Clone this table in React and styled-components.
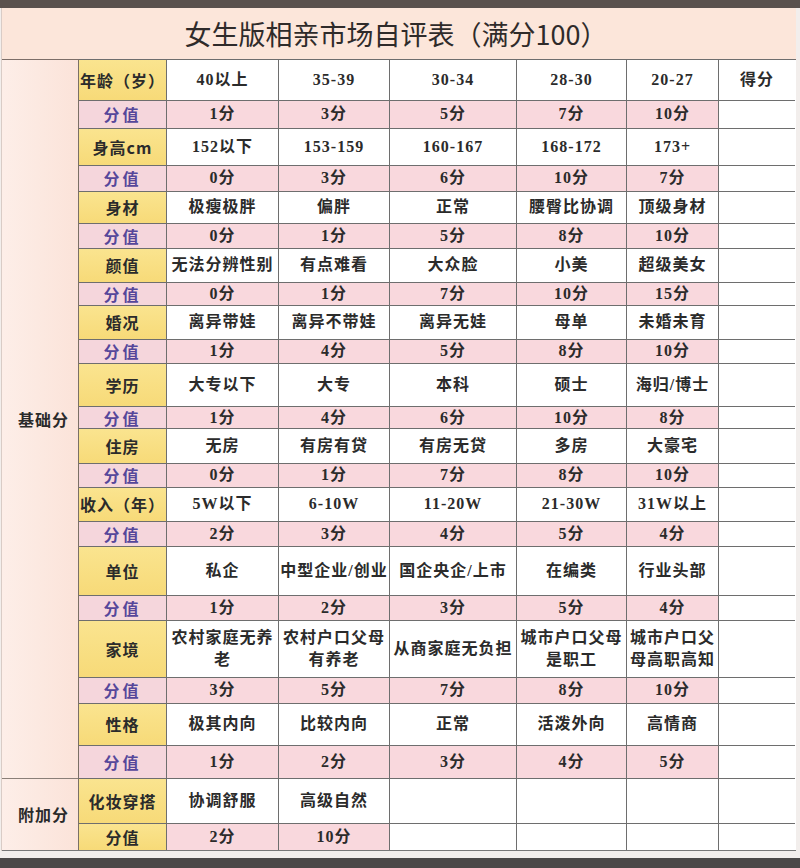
import styled, { createGlobalStyle } from "styled-components";

const GlobalStyle = createGlobalStyle`
  body {
    margin: 0;
    background: #f2eeec;
    font-family: "Liberation Serif", "Noto Sans CJK SC", serif;
  }
`;

const COLS = "88px 112px 111px 127px 110px 92px 76px";

const baseRows = [
    { label: "年龄（岁）", items: ["40以上", "35-39", "30-34", "28-30", "20-27"], extra: "得分", h: 41, scores: ["1分", "3分", "5分", "7分", "10分"], sh: 28 },
    { label: "身高cm", items: ["152以下", "153-159", "160-167", "168-172", "173+"], h: 37, scores: ["0分", "3分", "6分", "10分", "7分"], sh: 26 },
    { label: "身材", items: ["极瘦极胖", "偏胖", "正常", "腰臀比协调", "顶级身材"], h: 32, scores: ["0分", "1分", "5分", "8分", "10分"], sh: 25 },
    { label: "颜值", items: ["无法分辨性别", "有点难看", "大众脸", "小美", "超级美女"], h: 34, scores: ["0分", "1分", "7分", "10分", "15分"], sh: 23 },
    { label: "婚况", items: ["离异带娃", "离异不带娃", "离异无娃", "母单", "未婚未育"], h: 34, scores: ["1分", "4分", "5分", "8分", "10分"], sh: 24 },
    { label: "学历", items: ["大专以下", "大专", "本科", "硕士", "海归/博士"], h: 43, scores: ["1分", "4分", "6分", "10分", "8分"], sh: 22 },
    { label: "住房", items: ["无房", "有房有贷", "有房无贷", "多房", "大豪宅"], h: 35, scores: ["0分", "1分", "7分", "8分", "10分"], sh: 24 },
    { label: "收入（年）", items: ["5W以下", "6-10W", "11-20W", "21-30W", "31W以上"], h: 34, scores: ["2分", "3分", "4分", "5分", "4分"], sh: 25 },
    { label: "单位", items: ["私企", "中型企业/创业", "国企央企/上市", "在编类", "行业头部"], h: 49, scores: ["1分", "2分", "3分", "5分", "4分"], sh: 25 },
    { label: "家境", items: ["农村家庭无养\n老", "农村户口父母\n有养老", "从商家庭无负担", "城市户口父母\n是职工", "城市户口父\n母高职高知"], h: 57, scores: ["3分", "5分", "7分", "8分", "10分"], sh: 26 },
    { label: "性格", items: ["极其内向", "比较内向", "正常", "活泼外向", "高情商"], h: 42, scores: ["1分", "2分", "3分", "4分", "5分"], sh: 33 },
];

const extraRows = [
    { label: "化妆穿搭", items: ["协调舒服", "高级自然", "", "", ""], h: 45, scores: ["2分", "10分", "", "", ""], sh: 27, yellowScoreLabel: true },
];

const sum = (rows) => rows.reduce((acc, r) => acc + r.h + r.sh, 0);

const ItemRows = ({ rows }) =>
    rows.map((row) => (
        <div key={row.label}>
            <Row $h={row.h}>
                <LabelCell $tone="yellow">{row.label}</LabelCell>
                {row.items.map((item, i) => (
                    <Cell key={i}>{item}</Cell>
                ))}
                <Cell>{row.extra || ""}</Cell>
            </Row>
            <Row $h={row.sh}>
                <LabelCell $tone={row.yellowScoreLabel ? "yellow" : "pink"}>分值</LabelCell>
                {row.scores.map((s, i) => (
                    <Cell key={i} $pink={s !== ""}>{s}</Cell>
                ))}
                <Cell />
            </Row>
        </div>
    ));

const App = () => {
    return (
        <Page>
            <GlobalStyle />
            <TopBar />
            <Sheet>
                <TitleBar>女生版相亲市场自评表（满分100）</TitleBar>
                <Body>
                    <SectionColumn>
                        <Section $h={sum(baseRows)} $line>基础分</Section>
                        <Section $h={sum(extraRows)}>附加分</Section>
                    </SectionColumn>
                    <Rows>
                        <ItemRows rows={baseRows} />
                        <ItemRows rows={extraRows} />
                    </Rows>
                </Body>
            </Sheet>
            <BottomBar />
        </Page>
    );
};

const Page = styled.div`
  width: 800px;
  height: 868px;
  display: flex;
  flex-direction: column;
  overflow: hidden;
`;

const TopBar = styled.div`
  height: 8px;
  background: #5a514d;
`;

const BottomBar = styled.div`
  margin-top: auto;
  height: 10px;
  background: #4b4848;
`;

const Sheet = styled.div`
  width: 795px;
  border-left: 1px solid #d9ccc6;
  margin-left: 1px;
  box-sizing: border-box;
  background: #fff;
`;

const TitleBar = styled.div`
  height: 51px;
  border-bottom: 1px solid #7c6e68;
  background: #fce6da;
  display: flex;
  align-items: center;
  justify-content: center;
  font-family: "Noto Sans CJK SC", sans-serif;
  font-size: 27px;
  color: #2f2b2a;
  padding-right: 6px;
`;

const Body = styled.div`
  display: flex;
  border-bottom: 1px solid #777;
`;

const SectionColumn = styled.div`
  width: 76px;
  display: flex;
  flex-direction: column;
  background: linear-gradient(to right, #fdeee8, #fbe3d9);
  border-right: 1px solid #7a7066;
`;

const Section = styled.div`
  height: ${(p) => p.$h}px;
  box-sizing: border-box;
  display: flex;
  align-items: center;
  padding-left: 16px;
  font-family: "Noto Sans CJK SC", sans-serif;
  font-weight: 700;
  font-size: 16px;
  letter-spacing: 1px;
  color: #2a2a2a;
  border-bottom: ${(p) => (p.$line ? "1px solid #8a7f78" : "none")};
  margin-top: ${(p) => (p.$line ? "0" : "-1px")};
`;

const Rows = styled.div`
  flex: 1;
  display: flex;
  flex-direction: column;
  margin-top: -1px;
`;

const Row = styled.div`
  display: grid;
  grid-template-columns: ${COLS};
  height: ${(p) => p.$h}px;
`;

const Cell = styled.div`
  box-sizing: border-box;
  border-right: 1px solid #6e6e6e;
  border-top: 1px solid #6e6e6e;
  background: ${(p) => (p.$pink ? "#f9d8dd" : "#fff")};
  display: flex;
  align-items: center;
  justify-content: center;
  text-align: center;
  white-space: pre;
  line-height: 1.4;
  font-weight: 700;
  font-size: 16px;
  letter-spacing: 1px;
  color: #2b2b2b;
  &:last-child {
    border-right: none;
  }
`;

const LabelCell = styled(Cell)`
  background: ${(p) => (p.$tone === "yellow" ? "linear-gradient(#fae48f, #f7da78)" : "#f5d6dc")};
  color: ${(p) => (p.$tone === "yellow" ? "#2b2b2b" : "#56479a")};
  font-family: "Noto Sans CJK SC", sans-serif;
  letter-spacing: ${(p) => (p.$tone === "yellow" ? "1px" : "3px")};
`;

export default App;
